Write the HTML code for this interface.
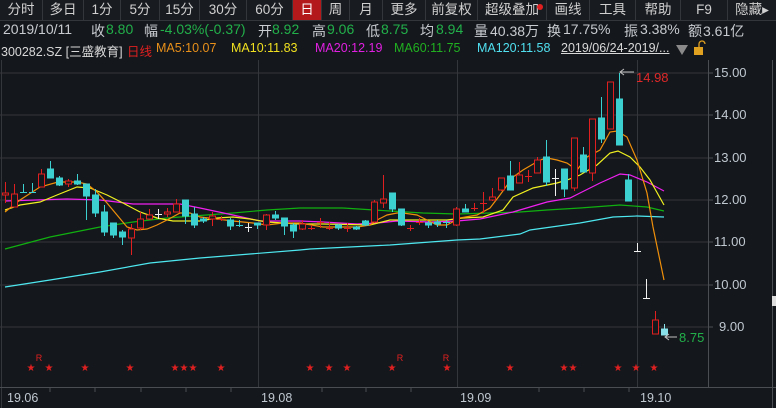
<!DOCTYPE html>
<html><head><meta charset="utf-8"><style>
*{margin:0;padding:0;box-sizing:border-box}
body{width:776px;height:408px;background:#14171c;overflow:hidden;font-family:"Liberation Sans","Noto Sans CJK SC",sans-serif;color:#c8ccd0;position:relative}
.tb{position:absolute;left:0;top:0;width:776px;height:21px;background:#181b20;border-bottom:1px solid #33363b}
.tb span{position:absolute;top:0;height:20px;line-height:20px;font-size:13.5px;text-align:center;color:#d0d0d0;border-right:1px solid #33363b}
.row{position:absolute;left:0;font-size:14px;white-space:nowrap}
.row span{position:absolute;top:0}
.g{color:#22b04a}.w{color:#d8d8d8}
</style></head><body>
<div class="tb">
<span style="left:0;width:43px">分时</span>
<span style="left:43px;width:41px">多日</span>
<span style="left:84px;width:37px">1分</span>
<span style="left:121px;width:39px">5分</span>
<span style="left:160px;width:40px">15分</span>
<span style="left:200px;width:47px">30分</span>
<span style="left:247px;width:46px">60分</span>
<span style="left:293px;width:29px;background:#b3191b;color:#fff">日</span>
<span style="left:322px;width:28px">周</span>
<span style="left:350px;width:33px">月</span>
<span style="left:383px;width:43px">更多</span>
<span style="left:426px;width:52px">前复权</span>
<span style="left:478px;width:69px">超级叠加</span>
<span style="left:547px;width:43px">画线</span>
<span style="left:590px;width:46px">工具</span>
<span style="left:636px;width:45px">帮助</span>
<span style="left:681px;width:47px">F9</span>
<span style="left:728px;width:48px;border:none">隐藏▸</span>
<div style="position:absolute;left:537px;top:4px;width:6px;height:6px;border-radius:50%;background:#e02020"></div>
</div>
<div class="row" style="top:21px;height:18px">
<span style="left:3px">2019/10/11</span>
<span style="left:91px">收</span><span class="g" style="left:106px">8.80</span>
<span style="left:144px">幅</span><span class="g" style="left:160px">-4.03%(-0.37)</span>
<span style="left:258px">开</span><span class="g" style="left:272px">8.92</span>
<span style="left:312px">高</span><span class="g" style="left:327px">9.06</span>
<span style="left:366px">低</span><span class="g" style="left:381px">8.75</span>
<span style="left:420px">均</span><span class="g" style="left:436px">8.94</span>
<span style="left:474px">量</span><span style="left:490px">40.38万</span>
<span style="left:547px">换</span><span style="left:563px">17.75%</span>
<span style="left:624px">振</span><span style="left:640px">3.38%</span>
<span style="left:688px">额</span><span style="left:703px">3.61亿</span>
</div>
<div class="row" style="top:41px;height:16px;font-size:12.5px">
<span class="w" style="left:1px">300282.SZ [三盛教育]</span>
<span style="left:127px;color:#e02020">日线</span>
<span style="left:156px;color:#e8901a">MA5:10.07</span>
<span style="left:231px;color:#f0e020">MA10:11.83</span>
<span style="left:315px;color:#e020e0">MA20:12.19</span>
<span style="left:394px;color:#20b020">MA60:11.75</span>
<span style="left:477px;color:#50e0f0">MA120:11.58</span>
<span class="w" style="left:561px;text-decoration:underline">2019/06/24-2019/...</span>
</div>
<svg width="776" height="408" style="position:absolute;left:0;top:0" font-family="Liberation Sans, sans-serif">
<polygon points="676,45 688,45 682,55" fill="#8a8a8a"/>
<rect x="694" y="47" width="9" height="8" fill="#e0a020"/>
<path d="M699,47 v-3 a3,3 0 0 1 6,0" stroke="#e0a020" fill="none" stroke-width="1.3"/>
<g stroke="#33363b" stroke-width="1">
<line x1="0" y1="73" x2="708" y2="73"/><line x1="0" y1="115" x2="708" y2="115"/><line x1="0" y1="158" x2="708" y2="158"/><line x1="0" y1="200" x2="708" y2="200"/><line x1="0" y1="242" x2="708" y2="242"/><line x1="0" y1="285" x2="708" y2="285"/><line x1="0" y1="327" x2="708" y2="327"/>
<line x1="258.5" y1="60" x2="258.5" y2="387"/><line x1="457.5" y1="60" x2="457.5" y2="387"/><line x1="637.5" y1="60" x2="637.5" y2="387"/>
<line x1="1.5" y1="60" x2="1.5" y2="408"/>
</g>
<g stroke="#4a4d52"><line x1="708.5" y1="60" x2="708.5" y2="387"/><line x1="772.5" y1="60" x2="772.5" y2="408"/><line x1="0" y1="387.5" x2="776" y2="387.5"/>
<line x1="708" y1="73" x2="713" y2="73"/><line x1="708" y1="115" x2="713" y2="115"/><line x1="708" y1="158" x2="713" y2="158"/><line x1="708" y1="200" x2="713" y2="200"/><line x1="708" y1="242" x2="713" y2="242"/><line x1="708" y1="285" x2="713" y2="285"/><line x1="708" y1="327" x2="713" y2="327"/>
<line x1="50" y1="388" x2="50" y2="392"/><line x1="95" y1="388" x2="95" y2="392"/><line x1="141" y1="388" x2="141" y2="392"/><line x1="186" y1="388" x2="186" y2="392"/><line x1="231" y1="388" x2="231" y2="392"/><line x1="322" y1="388" x2="322" y2="392"/><line x1="366" y1="388" x2="366" y2="392"/><line x1="411" y1="388" x2="411" y2="392"/><line x1="539" y1="388" x2="539" y2="392"/><line x1="584" y1="388" x2="584" y2="392"/><line x1="629" y1="388" x2="629" y2="392"/>
</g>
<rect x="772" y="296" width="4" height="10" fill="#ddd"/>
<g fill="#c0c8d0" font-size="13">
<text x="714" y="77">15.00</text><text x="714" y="119">14.00</text><text x="714" y="162">13.00</text><text x="714" y="204">12.00</text><text x="714" y="246">11.00</text><text x="714" y="289">10.00</text><text x="719" y="331">9.00</text>
<text x="7" y="402" font-size="12.5">19.06</text><text x="261" y="402" font-size="12.5">19.08</text><text x="460" y="402" font-size="12.5">19.09</text><text x="640" y="402" font-size="12.5">19.10</text>
</g>
<polyline fill="none" stroke="#4ee8f0" stroke-width="1.2" points="5,287 50,280 100,272 150,263 200,258 250,254 300,250 310,249 390,245 457,240 480,239 520,234 530,230 580,223 613,217 637,216 664,217"/>
<polyline fill="none" stroke="#10b010" stroke-width="1.2" points="5,249 50,237 100,227 133,222 167,218 233,213 267,210 300,208 343,208 390,211 423,213 457,214 490,213 520,212 547,210 580,208 620,205 647,207 664,211"/>
<polyline fill="none" stroke="#f020f0" stroke-width="1.2" points="5,201 67,199 100,200 133,204 150,204 180,204 200,208 233,215 260,221 300,221 323,222 357,224 377,223 397,221 430,222 457,221 480,219 513,212 547,202 570,198 580,193 600,183 620,174 630,175 647,182 664,191"/>
<polyline fill="none" stroke="#f0f020" stroke-width="1.2" points="5,210 20,205 40,202 57,195 77,187 90,188 107,195 123,203 140,212 157,218 173,221 200,221 217,218 233,217 250,219 267,222 300,224 323,224 370,225 390,220 423,220 447,220 463,218 483,217 503,210 513,197 533,188 557,183 567,180 580,175 597,165 610,153 618,151 630,157 640,167 650,180 664,205"/>
<polyline fill="none" stroke="#f0900a" stroke-width="1.2" points="5,212 20,200 40,187 58,182 77,182 87,184 97,192 107,203 117,215 127,227 137,230 147,229 157,225 167,220 180,213 190,213 200,217 217,219 233,221 253,223 267,225 283,223 300,223 323,227 357,227 370,225 377,220 387,215 397,213 403,213 417,215 427,220 437,225 447,225 460,218 477,215 490,208 500,195 513,177 523,170 540,160 547,158 557,160 567,163 577,170 587,157 600,150 610,132 617,131 627,137 637,160 647,193 653,227 664,280"/>
<g stroke-width="1" shape-rendering="crispEdges">
<g stroke="#e02020" fill="#14171c">
<line x1="5.5" y1="182" x2="5.5" y2="203"/><rect x="2.5" y="193" width="6" height="2"/>
<line x1="14.5" y1="184" x2="14.5" y2="207"/><rect x="11.5" y="194" width="6" height="13"/>
<line x1="41.5" y1="169" x2="41.5" y2="187"/><rect x="38.5" y="174" width="6" height="13"/>
<line x1="68.5" y1="179" x2="68.5" y2="187"/><rect x="65.5" y="181" width="6" height="3"/>
<line x1="131.5" y1="224" x2="131.5" y2="255"/><rect x="128.5" y="229" width="6" height="9"/>
<line x1="140.5" y1="212" x2="140.5" y2="230"/><rect x="137.5" y="219" width="6" height="9"/>
<line x1="149.5" y1="209" x2="149.5" y2="220"/><rect x="146.5" y="215" width="6" height="4"/>
<line x1="167.5" y1="208" x2="167.5" y2="217"/><rect x="164.5" y="212" width="6" height="2"/>
<line x1="176.5" y1="199" x2="176.5" y2="212"/><rect x="173.5" y="204" width="6" height="8"/>
<line x1="212.5" y1="212" x2="212.5" y2="226"/><rect x="209.5" y="216" width="6" height="3"/>
<line x1="221.5" y1="216" x2="221.5" y2="221"/><line x1="218" y1="219.5" x2="225" y2="219.5"/>
<line x1="266.5" y1="214" x2="266.5" y2="230"/><rect x="263.5" y="215" width="6" height="10"/>
<line x1="302.5" y1="220" x2="302.5" y2="230"/><rect x="299.5" y="224" width="6" height="5"/>
<line x1="311.5" y1="225" x2="311.5" y2="230"/><line x1="308" y1="228.5" x2="315" y2="228.5"/>
<line x1="320.5" y1="218" x2="320.5" y2="228"/><line x1="317" y1="222.5" x2="324" y2="222.5"/>
<line x1="329.5" y1="222" x2="329.5" y2="230"/><line x1="326" y1="228.5" x2="333" y2="228.5"/>
<line x1="347.5" y1="223" x2="347.5" y2="232"/><line x1="344" y1="228.5" x2="351" y2="228.5"/>
<line x1="374.5" y1="200" x2="374.5" y2="223"/><rect x="371.5" y="202" width="6" height="20"/>
<line x1="383.5" y1="175" x2="383.5" y2="208"/><rect x="380.5" y="199" width="6" height="4"/>
<line x1="410.5" y1="225" x2="410.5" y2="231"/><line x1="407" y1="228.5" x2="414" y2="228.5"/>
<line x1="419.5" y1="218" x2="419.5" y2="225"/><line x1="416" y1="222.5" x2="423" y2="222.5"/>
<line x1="456.5" y1="207" x2="456.5" y2="226"/><rect x="453.5" y="209" width="6" height="16"/>
<line x1="474.5" y1="203" x2="474.5" y2="211"/><line x1="471" y1="208.5" x2="478" y2="208.5"/>
<line x1="483.5" y1="192" x2="483.5" y2="213"/><line x1="480" y1="203.5" x2="487" y2="203.5"/>
<line x1="492.5" y1="188" x2="492.5" y2="201"/><rect x="489.5" y="197" width="6" height="3"/>
<line x1="501.5" y1="178" x2="501.5" y2="191"/><rect x="498.5" y="178" width="6" height="12"/>
<line x1="519.5" y1="162" x2="519.5" y2="183"/><rect x="516.5" y="175" width="6" height="8"/>
<line x1="528.5" y1="170" x2="528.5" y2="182"/><line x1="525" y1="176.5" x2="532" y2="176.5"/>
<line x1="537.5" y1="157" x2="537.5" y2="173"/><rect x="534.5" y="160" width="6" height="13"/>
<line x1="574.5" y1="138" x2="574.5" y2="191"/><rect x="571.5" y="138" width="6" height="50"/>
<line x1="592.5" y1="119" x2="592.5" y2="181"/><rect x="589.5" y="119" width="6" height="54"/>
<rect x="607.5" y="82" width="6" height="47"/>
<line x1="655.5" y1="311" x2="655.5" y2="334"/><rect x="652.5" y="320" width="6" height="14"/>
</g>
<g stroke="#3cd0d0" fill="#3cd0d0">
<line x1="23.5" y1="184" x2="23.5" y2="193"/><line x1="20" y1="192.5" x2="27" y2="192.5"/>
<line x1="32.5" y1="183" x2="32.5" y2="193"/><line x1="29" y1="192.5" x2="36" y2="192.5"/>
<line x1="50.5" y1="161" x2="50.5" y2="178"/><rect x="47.5" y="169" width="6" height="9"/>
<line x1="59.5" y1="176" x2="59.5" y2="186"/><rect x="56.5" y="178" width="6" height="7"/>
<line x1="77.5" y1="174" x2="77.5" y2="185"/><rect x="74.5" y="181" width="6" height="3"/>
<line x1="86.5" y1="184" x2="86.5" y2="220"/><rect x="83.5" y="184" width="6" height="12"/>
<line x1="95.5" y1="189" x2="95.5" y2="217"/><rect x="92.5" y="195" width="6" height="18"/>
<line x1="104.5" y1="205" x2="104.5" y2="236"/><rect x="101.5" y="212" width="6" height="20"/>
<line x1="113.5" y1="223" x2="113.5" y2="238"/><rect x="110.5" y="223" width="6" height="12"/>
<line x1="122.5" y1="230" x2="122.5" y2="245"/><rect x="119.5" y="232" width="6" height="5"/>
<line x1="185.5" y1="200" x2="185.5" y2="224"/><rect x="182.5" y="200" width="6" height="16"/>
<line x1="194.5" y1="207" x2="194.5" y2="228"/><rect x="191.5" y="214" width="6" height="11"/>
<line x1="203.5" y1="217" x2="203.5" y2="223"/><rect x="200.5" y="219" width="6" height="2"/>
<line x1="230.5" y1="218" x2="230.5" y2="230"/><rect x="227.5" y="220" width="6" height="6"/>
<line x1="239.5" y1="220" x2="239.5" y2="227"/><line x1="236" y1="225.5" x2="243" y2="225.5"/>
<line x1="257.5" y1="223" x2="257.5" y2="229"/><rect x="254.5" y="223" width="6" height="2"/>
<line x1="275.5" y1="211" x2="275.5" y2="220"/><rect x="272.5" y="215" width="6" height="3"/>
<line x1="284.5" y1="218" x2="284.5" y2="235"/><rect x="281.5" y="218" width="6" height="8"/>
<line x1="293.5" y1="223" x2="293.5" y2="238"/><rect x="290.5" y="225" width="6" height="6"/>
<line x1="338.5" y1="224" x2="338.5" y2="230"/><rect x="335.5" y="225" width="6" height="3"/>
<line x1="356.5" y1="226" x2="356.5" y2="230"/><rect x="353.5" y="227" width="6" height="2"/>
<line x1="365.5" y1="220" x2="365.5" y2="226"/><rect x="362.5" y="221" width="6" height="4"/>
<line x1="392.5" y1="193" x2="392.5" y2="212"/><rect x="389.5" y="193" width="6" height="16"/>
<line x1="401.5" y1="209" x2="401.5" y2="226"/><rect x="398.5" y="209" width="6" height="16"/>
<line x1="428.5" y1="221" x2="428.5" y2="228"/><rect x="425.5" y="223" width="6" height="2"/>
<line x1="437.5" y1="220" x2="437.5" y2="227"/><rect x="434.5" y="222" width="6" height="2"/>
<line x1="446.5" y1="220" x2="446.5" y2="228"/><line x1="443" y1="222.5" x2="450" y2="222.5"/>
<line x1="465.5" y1="204" x2="465.5" y2="212"/><rect x="462.5" y="209" width="6" height="3"/>
<line x1="510.5" y1="161" x2="510.5" y2="190"/><rect x="507.5" y="176" width="6" height="14"/>
<line x1="546.5" y1="140" x2="546.5" y2="186"/><rect x="543.5" y="157" width="6" height="25"/>
<line x1="564.5" y1="169" x2="564.5" y2="197"/><rect x="561.5" y="169" width="6" height="20"/>
<line x1="583.5" y1="147" x2="583.5" y2="172"/><rect x="580.5" y="155" width="6" height="17"/>
<line x1="601.5" y1="97" x2="601.5" y2="143"/><rect x="598.5" y="118" width="6" height="21"/>
<line x1="619.5" y1="73" x2="619.5" y2="145"/><rect x="616.5" y="99" width="6" height="46"/>
<line x1="628.5" y1="174" x2="628.5" y2="201"/><rect x="625.5" y="180" width="6" height="21"/>
</g>
<g stroke="#8ae0e8" fill="#8ae0e8"><line x1="664.5" y1="324" x2="664.5" y2="335"/><rect x="661.5" y="329" width="6" height="6"/></g>
<g stroke="#f0f0f0">
<line x1="158.5" y1="209" x2="158.5" y2="219"/><line x1="155" y1="214.5" x2="162" y2="214.5"/>
<line x1="248.5" y1="223" x2="248.5" y2="232"/><line x1="245" y1="227.5" x2="252" y2="227.5"/>
<line x1="555.5" y1="169" x2="555.5" y2="196"/><line x1="552" y1="178.5" x2="559" y2="178.5"/>
<line x1="637.5" y1="243" x2="637.5" y2="252"/><line x1="634" y1="251.5" x2="641" y2="251.5"/>
<line x1="646.5" y1="279" x2="646.5" y2="298"/><line x1="643" y1="298.5" x2="650" y2="298.5"/>
</g>
</g>
<g stroke="#c0c0c0" fill="none"><path d="M620,72 H634"/><path d="M624,69 L620,72 L624,75"/><path d="M665,337 H677"/><path d="M669,334 L665,337 L669,340"/></g>
<text x="636" y="82" fill="#e02828" font-size="13">14.98</text>
<text x="679" y="342" fill="#22b04a" font-size="13">8.75</text>
<g fill="#e02020" font-size="10" text-anchor="middle">
<text x="31" y="371">★</text><text x="49" y="371">★</text><text x="85" y="371">★</text><text x="130" y="371">★</text><text x="175" y="371">★</text><text x="184" y="371">★</text><text x="193" y="371">★</text><text x="221" y="371">★</text><text x="310" y="371">★</text><text x="329" y="371">★</text><text x="347" y="371">★</text><text x="392" y="371">★</text><text x="447" y="371">★</text><text x="510" y="371">★</text><text x="564" y="371">★</text><text x="573" y="371">★</text><text x="618" y="371">★</text><text x="636" y="371">★</text><text x="654" y="371">★</text>
<text x="39" y="361" font-size="9">R</text><text x="400" y="361" font-size="9">R</text><text x="446" y="361" font-size="9">R</text>
</g>
</svg>
</body></html>
